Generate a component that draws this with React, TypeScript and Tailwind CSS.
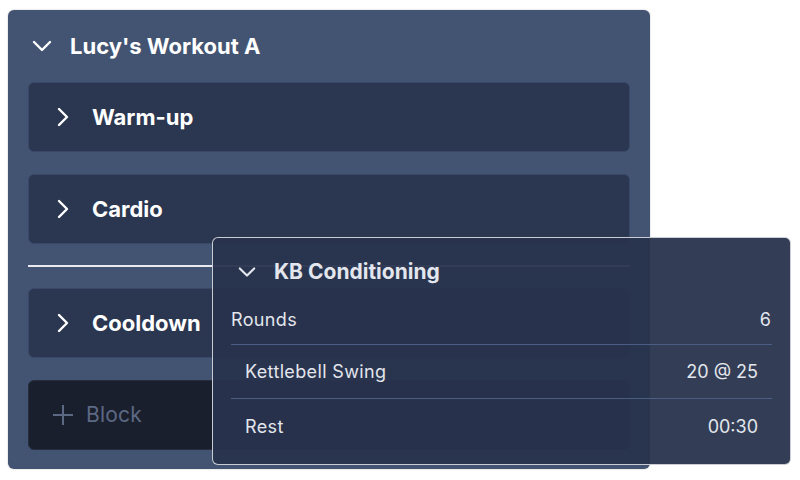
import React from 'react';

const blocks = ['Warm-up', 'Cardio'];

function ChevronDown({ className = '' }: { className?: string }) {
  return (
    <svg width="20" height="12" viewBox="0 0 20 12" fill="none" className={className}>
      <polyline points="2,2 10,10 18,2" stroke="currentColor" strokeWidth="2.4" strokeLinecap="round" strokeLinejoin="round" />
    </svg>
  );
}

function ChevronRight({ className = '' }: { className?: string }) {
  return (
    <svg width="12" height="20" viewBox="0 0 12 20" fill="none" className={className}>
      <polyline points="2,2 10,10 2,18" stroke="currentColor" strokeWidth="2.4" strokeLinecap="round" strokeLinejoin="round" />
    </svg>
  );
}

function BlockCard({ title }: { title: string }) {
  return (
    <div className="h-[70px] rounded-md bg-[#2b3650] border border-[#3a4867] flex items-center pl-[28px]">
      <ChevronRight className="text-white" />
      <span className="ml-[23px] text-[22px] font-bold text-white">{title}</span>
    </div>
  );
}

export default function App() {
  const rows = [
    { label: 'Kettlebell Swing', value: '20 @ 25' },
    { label: 'Rest', value: '00:30' },
  ];

  return (
    <div className="relative min-h-[480px] bg-white pt-[10px] pl-2 font-['Inter',sans-serif]">
      {/* Workout panel */}
      <div className="w-[642px] rounded-md bg-[#435473] shadow-[0_0_2px_rgba(0,0,0,0.25)] px-5 pb-[19px]">
        <div className="h-[72px] flex items-center pl-[4px]">
          <ChevronDown className="text-white" />
          <span className="ml-[18px] text-[22px] font-bold text-white">Lucy's Workout A</span>
        </div>
        <div className="flex flex-col gap-[22px]">
          {blocks.map((b) => (
            <BlockCard key={b} title={b} />
          ))}
          <div className="h-[2px] -my-px bg-[#e8eaef]" />
          <BlockCard title="Cooldown" />
          <div className="h-[70px] rounded-md bg-[#1a1f2d] border border-[#262d3f] flex items-center pl-[23px]">
            <svg width="22" height="22" viewBox="0 0 22 22" className="text-[#5d6984]">
              <path d="M11 1v20M1 11h20" stroke="currentColor" strokeWidth="2" />
            </svg>
            <span className="ml-[12px] text-[21px] text-[#5d6984] tracking-[0.01em]">Block</span>
          </div>
        </div>
      </div>

      {/* Dragged block preview */}
      <div className="absolute left-[212px] top-[237px] w-[579px] h-[228px] rounded-md bg-[#28334d]/95 border border-white/75 px-[18px]">
        <div className="h-[56px] flex items-center pl-[6px] pt-[12px]">
          <ChevronDown className="text-[#e3e6ec] scale-90" />
          <span className="ml-[17px] text-[21px] font-bold text-[#e3e6ec]">KB Conditioning</span>
        </div>
        <div className="h-[51px] flex items-center justify-between border-b border-[#4a5d83] text-[#e3e6ec]">
          <span className="text-[18px] tracking-[0.02em]">Rounds</span>
          <span className="text-[18px] pr-px">6</span>
        </div>
        <div className="h-[54px] flex items-center justify-between px-[14px] border-b border-[#4a5d83] text-[#e3e6ec]">
          {rows.slice(0, 1).map((r) => (
            <React.Fragment key={r.label}>
              <span className="text-[18px] tracking-[0.02em]">{r.label}</span>
              <span className="text-[18px]">{r.value}</span>
            </React.Fragment>
          ))}
        </div>
        <div className="h-[54px] flex items-center justify-between px-[14px] text-[#e3e6ec]">
          {rows.slice(1).map((r) => (
            <React.Fragment key={r.label}>
              <span className="text-[18px] tracking-[0.02em]">{r.label}</span>
              <span className="text-[18px]">{r.value}</span>
            </React.Fragment>
          ))}
        </div>
      </div>
    </div>
  );
}
